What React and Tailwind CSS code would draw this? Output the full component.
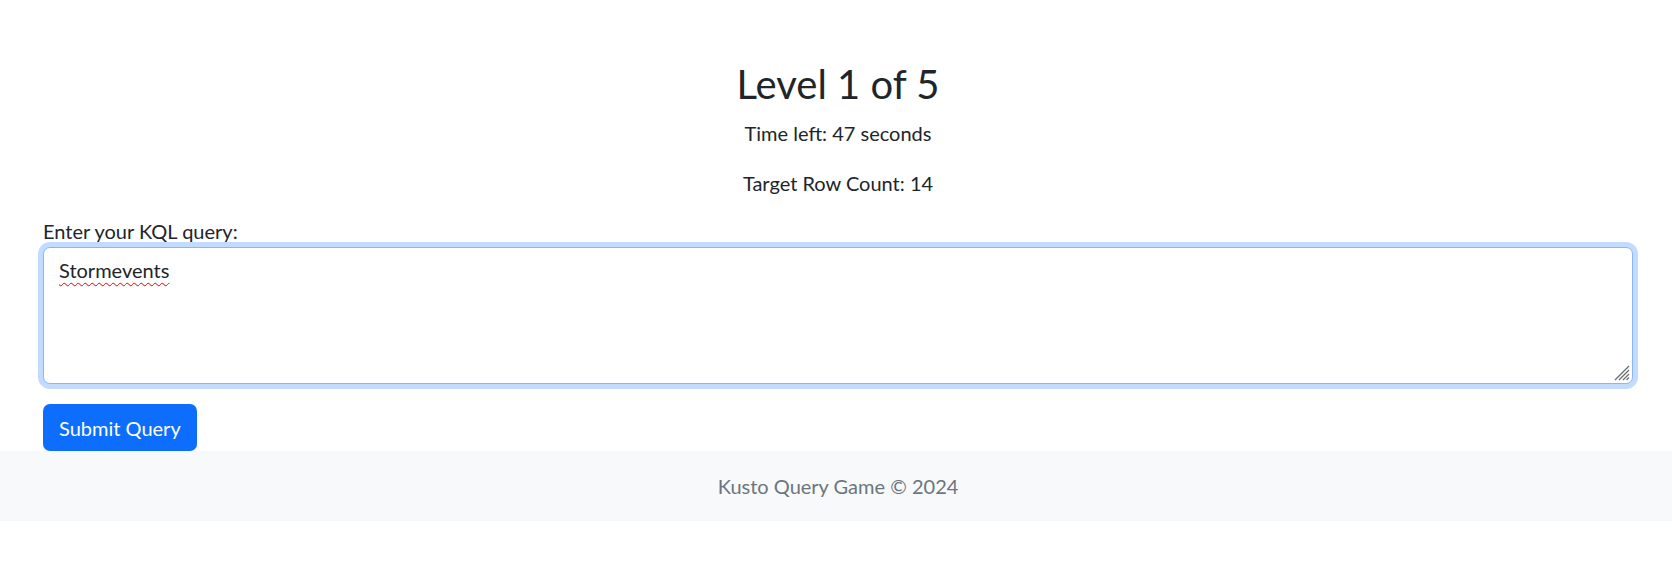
const App = () => {
  return (
    <div className="min-h-[578px] bg-white text-[#212529] font-['Lato','Noto_Sans',sans-serif] text-[20px] leading-[30px]">
      <div className="ml-[43px] w-[1590px] pt-[60px]">
        <h2 className="text-center text-[40px] leading-[48px] font-normal mb-[10px]">Level 1 of 5</h2>
        <p className="text-center mb-[20px]">Time left: 47 seconds</p>
        <p className="text-center mb-[18px]">Target Row Count: 14</p>

        <div className="mb-[20px]">
          <label className="block h-[31px]">Enter your KQL query:</label>
          <div className="relative h-[137px] rounded-[7px] border border-[#86b7fe] bg-white px-[15px] py-[7px] shadow-[0_0_0_5px_#c2dbfe]">
            <span className="underline decoration-wavy decoration-[#e00] decoration-1 underline-offset-[4px]">Stormevents</span>
            <svg
              className="absolute right-[2px] bottom-[2px]"
              width="18"
              height="18"
              viewBox="0 0 18 18"
            >
              <g stroke="#6b6b6b" strokeWidth="1.3">
                <line x1="17" y1="3" x2="3" y2="17" />
                <line x1="17" y1="7" x2="7" y2="17" />
                <line x1="17" y1="11" x2="11" y2="17" />
                <line x1="17" y1="14.5" x2="14.5" y2="17" />
              </g>
            </svg>
          </div>
        </div>

        <button className="h-[47px] rounded-[7px] bg-[#0d6efd] px-[16px] text-white">Submit Query</button>
      </div>

      <footer className="bg-[#f8f9fa] py-[20px]">
        <div className="ml-[43px] w-[1590px] text-center text-[#6c757d]">Kusto Query Game © 2024</div>
      </footer>
    </div>
  );
};

export default App;
